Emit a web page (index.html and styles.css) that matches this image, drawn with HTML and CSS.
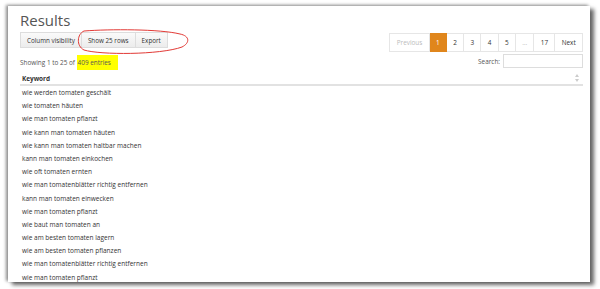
FILE: index.html
```html
<!DOCTYPE html>
<html>
<head>
<meta charset="utf-8">
<link rel="stylesheet" href="styles.css">
</head>
<body>
<div class="panel">
  <h1 class="title">Results</h1>
  <div class="toolbar">
    <div class="btn-group">
      <span class="btn">Column visibility</span>
      <span class="btn">Show 25 rows</span>
      <span class="btn">Export</span>
    </div>
    <div class="pager">
      <span class="pg disabled">Previous</span>
      <span class="pg active">1</span>
      <span class="pg">2</span>
      <span class="pg">3</span>
      <span class="pg">4</span>
      <span class="pg">5</span>
      <span class="pg disabled">…</span>
      <span class="pg">17</span>
      <span class="pg">Next</span>
    </div>
  </div>
  <div class="inforow">
    <div class="info">Showing 1 to 25 of <mark class="hl">409 entries</mark></div>
    <label class="search">Search: <span class="input"></span></label>
  </div>
  <div class="thead">
    <span class="th">Keyword</span>
    <svg class="sort" width="4" height="8" viewBox="0 0 4 8"><path d="M2 0 L4 3 L0 3 Z M2 8 L4 5 L0 5 Z" fill="#ccc"/></svg>
  </div>
  <ul class="rows">
    <li>wie werden tomaten geschält</li>
    <li>wie tomaten häuten</li>
    <li>wie man tomaten pflanzt</li>
    <li>wie kann man tomaten häuten</li>
    <li>wie kann man tomaten haltbar machen</li>
    <li>kann man tomaten einkochen</li>
    <li>wie oft tomaten ernten</li>
    <li>wie man tomatenblätter richtig entfernen</li>
    <li>kann man tomaten einwecken</li>
    <li>wie man tomaten pflanzt</li>
    <li>wie baut man tomaten an</li>
    <li>wie am besten tomaten lagern</li>
    <li>wie am besten tomaten pflanzen</li>
    <li>wie man tomatenblätter richtig entfernen</li>
    <li>wie man tomaten pflanzt</li>
  </ul>
</div>
<svg class="annot" width="600" height="289" viewBox="0 0 600 289">
  <path d="M84 31 C77 34, 76 46, 84 50 C100 55, 160 55, 182 47 C190 43, 190 36, 180 34 C160 29, 110 29, 84 31" fill="none" stroke="#e23a36" stroke-width="1"/>
</svg>
</body>
</html>
```
FILE: styles.css
```css
html, body { margin: 0; padding: 0; background: #fff; }
body { width: 600px; height: 289px; overflow: hidden; position: relative; font-family: "Open Sans", "Liberation Sans", sans-serif; color: #333; }
.panel {
  margin: 6px 0 0 8px;
  width: 582px;
  height: 276px;
  box-sizing: border-box;
  padding: 0 7px 0 12px;
  background: #fff;
  box-shadow: -2px -1px 3px rgba(0,0,0,0.45), 4px 3px 4px rgba(0,0,0,0.6);
  overflow: hidden;
}
.title { margin: 0; padding-top: 3px; font-weight: 400; font-size: 15px; line-height: 22px; color: #555; }
.toolbar { display: flex; justify-content: space-between; align-items: flex-start; margin-top: 1px; height: 20px; }
.btn-group { display: flex; }
.btn { display: block; height: 16px; line-height: 15px; box-sizing: border-box; padding: 0 6px; font-size: 6.3px; border: 1px solid #ddd; background: linear-gradient(#fafafa, #ececec); color: #333; }
.btn + .btn { border-left: 0; }
.pager { display: flex; margin-top: 1px; }
.pg { display: block; height: 19px; line-height: 17px; box-sizing: border-box; padding: 0 6.3px; min-width: 16px; text-align: center; font-size: 6.4px; border: 1px solid #e6e6e6; color: #333; }
.pg + .pg { border-left: 0; }
.pg.disabled { color: #bbb; }
.pg.active { background: #e0861c; border-color: #e0861c; color: #fff; }
.inforow { display: flex; justify-content: space-between; align-items: center; margin-top: 2px; height: 14px; }
.info { font-size: 6.4px; color: #555; padding-top: 2px; }
.hl { background: #ffff00; color: #555; padding: 3px 7px 3px 1px; }
.search { display: flex; align-items: center; font-size: 6.4px; color: #555; }
.input { display: block; width: 80px; height: 14px; box-sizing: border-box; border: 1px solid #ddd; margin-left: 3px; }
.thead { display: flex; justify-content: space-between; align-items: center; height: 18px; box-sizing: border-box; padding: 4px 4px 0 2px; border-bottom: 2px solid #e2e2e2; }
.th { font-size: 6.4px; font-weight: 700; color: #333; }
.rows { list-style: none; margin: 0; padding: 0 0 0 2px; }
.rows li { font-size: 6.5px; line-height: 13.2px; height: 13.2px; color: #333; }
.annot { position: absolute; left: 0; top: 0; pointer-events: none; }
```
